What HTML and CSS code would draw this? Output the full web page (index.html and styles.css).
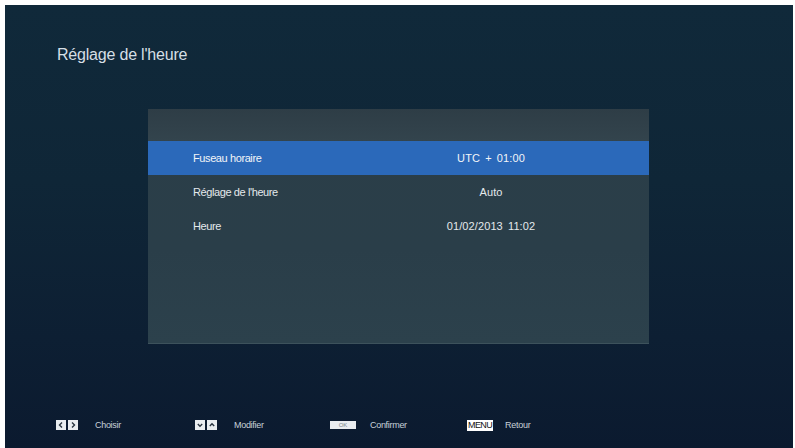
FILE: index.html
```html
<!DOCTYPE html>
<html lang="fr">
<head>
<meta charset="utf-8">
<title>Réglage de l'heure</title>
<link rel="stylesheet" href="styles.css">
</head>
<body>
<div class="screen">
  <h1 class="title">Réglage de l'heure</h1>
  <div class="panel">
    <div class="panel-head"></div>
    <div class="row selected">
      <span class="label">Fuseau horaire</span>
      <span class="value">UTC + 01:00</span>
    </div>
    <div class="row">
      <span class="label">Réglage de l'heure</span>
      <span class="value">Auto</span>
    </div>
    <div class="row">
      <span class="label">Heure</span>
      <span class="value">01/02/2013 11:02</span>
    </div>
  </div>
  <div class="footer">
    <div class="hint">
      <span class="keys">
        <span class="key"><svg viewBox="0 0 10 10" width="10" height="10"><path d="M6 2.5 L3.5 5 L6 7.5" fill="none" stroke="#2a3540" stroke-width="1.4"/></svg></span>
        <span class="key"><svg viewBox="0 0 10 10" width="10" height="10"><path d="M4 2.5 L6.5 5 L4 7.5" fill="none" stroke="#2a3540" stroke-width="1.4"/></svg></span>
      </span>
      <span class="hint-text">Choisir</span>
    </div>
    <div class="hint">
      <span class="keys">
        <span class="key"><svg viewBox="0 0 10 10" width="10" height="10"><path d="M2.8 4 L5 6.2 L7.2 4" fill="none" stroke="#2a3540" stroke-width="1.4"/></svg></span>
        <span class="key"><svg viewBox="0 0 10 10" width="10" height="10"><path d="M2.8 6 L5 3.8 L7.2 6" fill="none" stroke="#2a3540" stroke-width="1.4"/></svg></span>
      </span>
      <span class="hint-text">Modifier</span>
    </div>
    <div class="hint">
      <span class="key-ok">OK</span>
      <span class="hint-text">Confirmer</span>
    </div>
    <div class="hint">
      <span class="key-menu">MENU</span>
      <span class="hint-text">Retour</span>
    </div>
  </div>
</div>
</body>
</html>
```
FILE: styles.css
```css
html, body {
  margin: 0;
  padding: 0;
  background: #ffffff;
}
body {
  width: 795px;
  height: 448px;
  overflow: hidden;
  font-family: "Liberation Sans", Arial, sans-serif;
}
.screen {
  margin: 5px 2px 0 5px;
  height: 443px;
  display: flex;
  flex-direction: column;
  background: linear-gradient(180deg, #10293a 0%, #0f2637 40%, #0d1f33 75%, #0b1a2f 100%);
}
.title {
  margin: 0;
  padding: 40px 0 0 52px;
  height: 20px;
  font-size: 16px;
  line-height: 20px;
  font-weight: normal;
  color: #d6dfe5;
  letter-spacing: -0.2px;
}
.panel {
  margin: 44px 0 0 143px;
  width: 501px;
  height: 234px;
  background: linear-gradient(180deg, #2b3e48 0%, #2a3e49 60%, #2c414c 100%);
  box-shadow: 0 1px 0 #3d525c;
  display: flex;
  flex-direction: column;
}
.panel-head {
  height: 32px;
  background: linear-gradient(180deg, #2e3d46 0%, #33444d 100%);
}
.row {
  height: 34px;
  display: grid;
  grid-template-columns: 215px 166px;
  align-items: center;
  padding-left: 45px;
  font-size: 11px;
  color: #e4e9ec;
}
.label {
  letter-spacing: -0.4px;
}
.row.selected {
  background: #2b69ba;
  color: #f2f5f8;
}
.value {
  text-align: center;
  letter-spacing: 0.1px;
  word-spacing: 2px;
}
.footer {
  margin-top: auto;
  height: 36px;
  padding-left: 51px;
  display: grid;
  grid-template-columns: 139px 135px 137px auto;
  align-items: center;
  padding-bottom: 5px;
}
.hint {
  display: flex;
  align-items: center;
}
.keys {
  display: flex;
  gap: 2px;
  margin-right: 17px;
}
.key {
  width: 10px;
  height: 10px;
  background: #e9edf0;
  display: flex;
}
.key svg {
  display: block;
}
.key-ok {
  width: 26px;
  height: 8px;
  background: #e9edf0;
  color: #7a858c;
  font-size: 6px;
  line-height: 8px;
  text-align: center;
  margin-right: 14px;
}
.key-menu {
  height: 11px;
  padding: 0 1px;
  background: #ffffff;
  color: #111111;
  font-size: 9px;
  line-height: 11px;
  letter-spacing: -0.6px;
  margin-right: 12px;
}
.hint-text {
  font-size: 9px;
  color: #c8d1d8;
  letter-spacing: -0.3px;
}
```
